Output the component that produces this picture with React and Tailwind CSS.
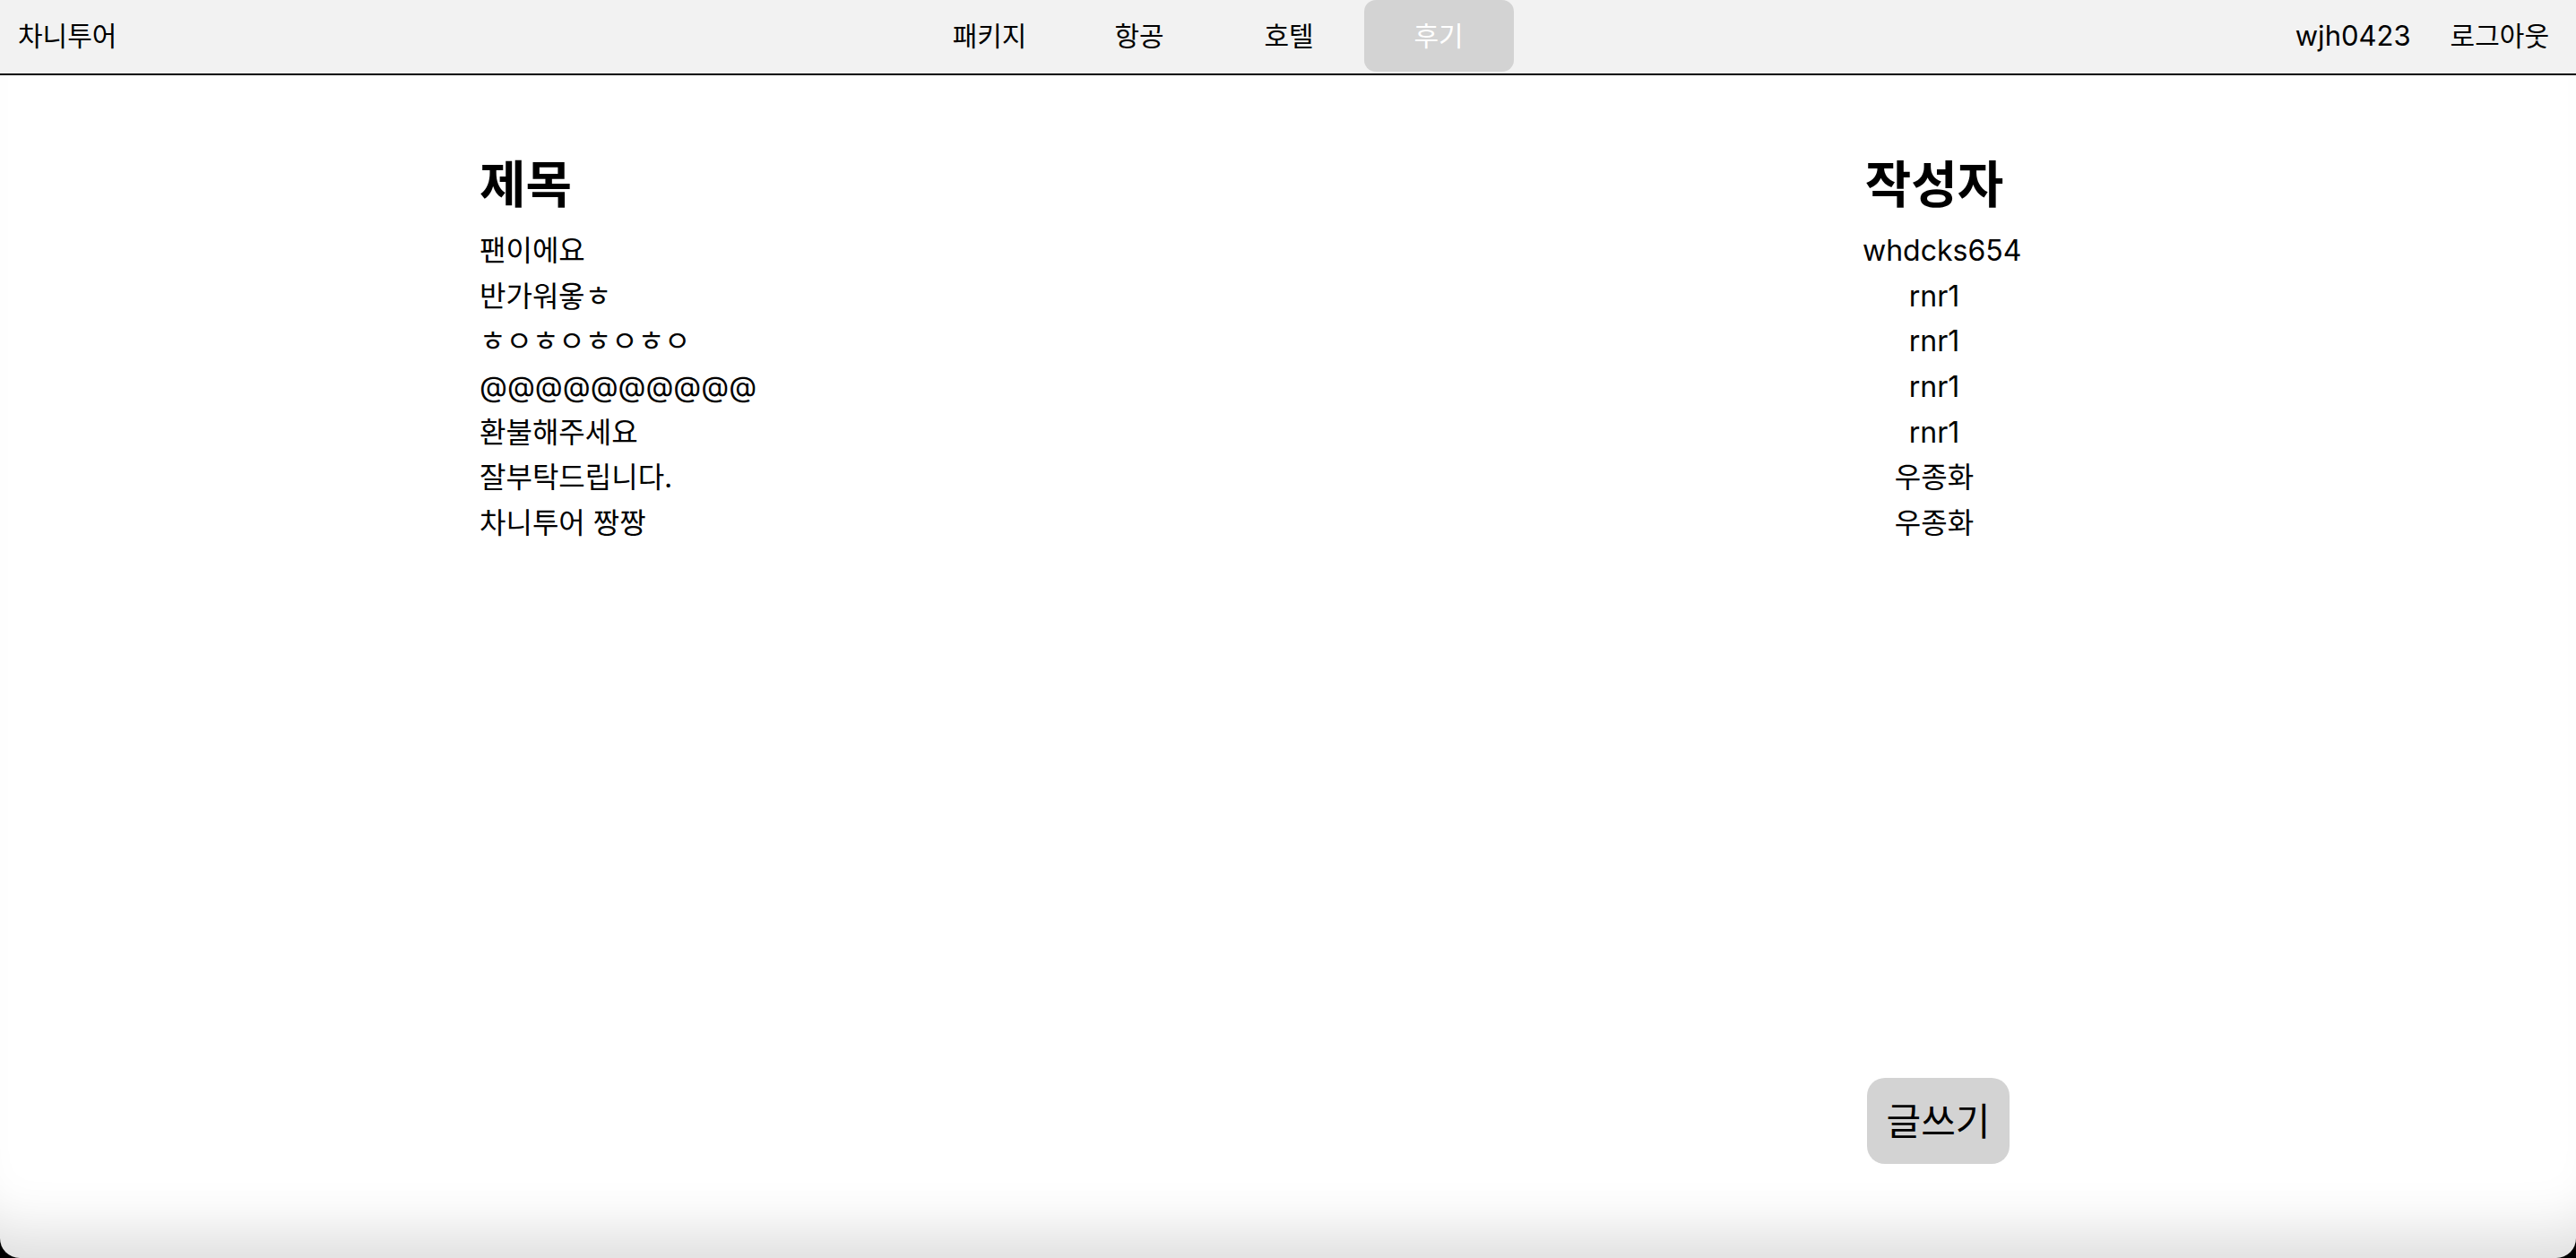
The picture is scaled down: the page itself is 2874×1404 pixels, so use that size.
import React from "react";

const posts = [
  { title: "팬이에요", author: "whdcks654" },
  { title: "반가워옿ㅎ", author: "rnr1" },
  { title: "ㅎㅇㅎㅇㅎㅇㅎㅇ", author: "rnr1" },
  { title: "@@@@@@@@@@", author: "rnr1" },
  { title: "환불해주세요", author: "rnr1" },
  { title: "잘부탁드립니다.", author: "우종화" },
  { title: "차니투어 짱짱", author: "우종화" },
];

const menus = ["패키지", "항공", "호텔", "후기"];

const Header = () => {
  return (
    <header className="flex items-start justify-between h-[84px] bg-[#f2f2f2] border-b-2 border-black pl-[20px] pr-[30px] text-[30px]">
      <div className="h-[80px] flex items-center">차니투어</div>
      <nav className="flex ml-[18px]">
        {menus.map((menu) => (
          <div
            key={menu}
            className={
              menu === "후기"
                ? "w-[167px] h-[80px] flex items-center justify-center rounded-[13px] bg-[#d3d3d3] text-white"
                : "w-[167px] h-[80px] flex items-center justify-center text-black"
            }
          >
            {menu}
          </div>
        ))}
      </nav>
      <div className="h-[80px] flex items-center gap-[44px]">
        <span className="text-[31px]">wjh0423</span>
        <span>로그아웃</span>
      </div>
    </header>
  );
};

const Review = () => {
  return (
    <div className="h-[1404px] bg-black font-[Inter,'Noto_Sans_CJK_KR',sans-serif] text-black">
      <div className="h-full flex flex-col bg-white rounded-b-[22px] overflow-hidden shadow-[inset_0_-75px_60px_-45px_rgba(0,0,0,0.13)]">
        <Header />

        <div className="flex-1 ml-[535px] w-[1703px] pt-[87px]">
          <div className="grid grid-cols-[1fr_160px] items-center h-[70px] mb-[14px]">
            <h2 className="text-[56px] font-bold leading-none">제목</h2>
            <h2 className="text-[56px] font-bold leading-none text-center whitespace-nowrap">작성자</h2>
          </div>
          {posts.map((post, i) => (
            <div key={i} className="grid grid-cols-[1fr_160px] items-center h-[50.6px] text-[32px]">
              <span>{post.title}</span>
              <span className="text-center">{post.author}</span>
            </div>
          ))}
        </div>

        <div className="ml-[535px] w-[1707px] flex justify-end pb-[105px]">
          <button className="w-[159px] h-[96px] rounded-[20px] bg-[#d3d3d3] text-[42px] text-black">
            글쓰기
          </button>
        </div>
      </div>
    </div>
  );
};

export default function App() {
  return <Review />;
}
